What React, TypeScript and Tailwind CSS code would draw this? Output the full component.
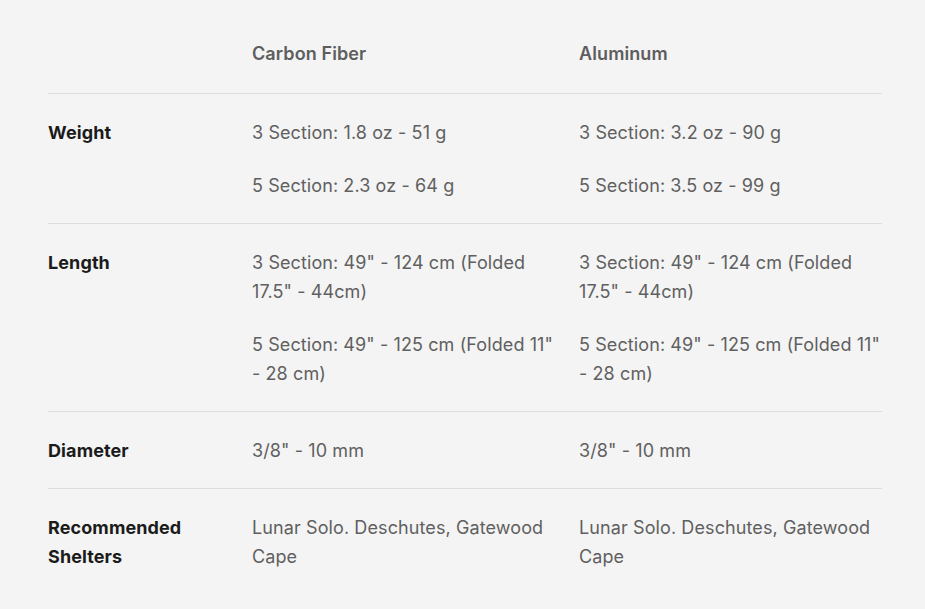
import React from "react";

type Row = {
  label: string[];
  carbon: string[][];
  aluminum: string[][];
};

const ROWS: Row[] = [
  {
    label: ["Weight"],
    carbon: [["3 Section: 1.8 oz - 51 g"], ["5 Section: 2.3 oz - 64 g"]],
    aluminum: [["3 Section: 3.2 oz - 90 g"], ["5 Section: 3.5 oz - 99 g"]],
  },
  {
    label: ["Length"],
    carbon: [
      ['3 Section: 49" - 124 cm (Folded', '17.5" - 44cm)'],
      ['5 Section: 49" - 125 cm (Folded 11"', "- 28 cm)"],
    ],
    aluminum: [
      ['3 Section: 49" - 124 cm (Folded', '17.5" - 44cm)'],
      ['5 Section: 49" - 125 cm (Folded 11"', "- 28 cm)"],
    ],
  },
  {
    label: ["Diameter"],
    carbon: [['3/8" - 10 mm']],
    aluminum: [['3/8" - 10 mm']],
  },
  {
    label: ["Recommended", "Shelters"],
    carbon: [["Lunar Solo. Deschutes, Gatewood", "Cape"]],
    aluminum: [["Lunar Solo. Deschutes, Gatewood", "Cape"]],
  },
];

function Cell({ paras }: { paras: string[][] }) {
  return (
    <div className="flex flex-col gap-6">
      {paras.map((lines, i) => (
        <p key={i}>
          {lines.map((l, j) => (
            <span key={j} className="block whitespace-nowrap">
              {l}
            </span>
          ))}
        </p>
      ))}
    </div>
  );
}

export default function App() {
  return (
    <div
      className="min-h-[609px] bg-[#f4f4f4] px-12 pt-[39px] text-[18px] leading-[29px] tracking-[0.1px] text-[#606060]"
      style={{ fontFamily: "Inter, 'Noto Sans', sans-serif" }}
    >
      <div className="w-[834px]">
        <div className="grid grid-cols-[204px_327px_1fr] border-b border-[#dddddd] pb-[25px] font-semibold text-[#5e5e5e]">
          <div />
          <div>Carbon Fiber</div>
          <div>Aluminum</div>
        </div>
        {ROWS.map((row, i) => (
          <div
            key={i}
            className={
              "grid grid-cols-[204px_327px_1fr] pt-6" +
              (i < ROWS.length - 1 ? " border-b border-[#dddddd] pb-[23px]" : "")
            }
          >
            <div className="font-bold text-[#1b1b1b]">
              {row.label.map((l, j) => (
                <span key={j} className="block">
                  {l}
                </span>
              ))}
            </div>
            <Cell paras={row.carbon} />
            <Cell paras={row.aluminum} />
          </div>
        ))}
      </div>
    </div>
  );
}
